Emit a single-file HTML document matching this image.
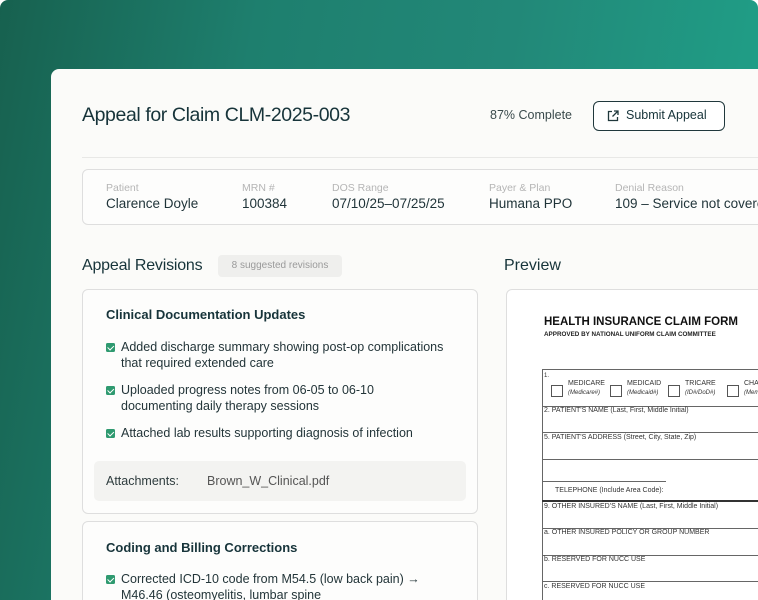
<!DOCTYPE html>
<html><head><meta charset="utf-8"><style>
*{margin:0;padding:0;box-sizing:border-box}
html,body{width:758px;height:600px;overflow:hidden;background:#fff;font-family:"Liberation Sans",sans-serif}
#w{position:relative;width:758px;height:600px;overflow:hidden}
.bg{position:absolute;left:0;top:0;width:758px;height:600px;border-radius:8px 8px 0 0;background:linear-gradient(100deg,#17614f 0%,#1e7f6e 30%,#228878 60%,#1fa58b 100%)}
.card{position:absolute;left:51px;top:69px;width:720px;height:540px;background:#fbfbf9;border-radius:8px}
.a{position:absolute;white-space:nowrap}
.t{color:#17343a}
.box{position:absolute;border:1px solid #dedede;border-radius:6px;background:#fdfdfc}
.lab{font-size:10.5px;color:#b5b5b5}
.val{font-size:13.5px;color:#1f3338}
.chk{position:absolute;width:9px;height:9px;background:#2f9a70;border-radius:1.5px}
.chk:after{content:"";position:absolute;left:2.5px;top:1px;width:2.5px;height:4.5px;border:solid #fff;border-width:0 1.2px 1.2px 0;transform:rotate(45deg)}
.it{font-size:12.5px;color:#233539;line-height:16px}
.f{position:absolute;font-size:7px;color:#333;white-space:nowrap}
.hl{position:absolute;left:542px;width:230px;height:1px;background:#666}
.cb{position:absolute;width:12px;height:12px;border:1px solid #555}
</style></head><body><div id="w">
<div class="bg"></div>
<div class="card"></div>
<div class="a t" style="left:82px;top:104px;font-size:19.5px;letter-spacing:-0.4px">Appeal for Claim CLM-2025-003</div>
<div class="a" style="left:490px;top:108px;font-size:12.5px;color:#3a4a4c">87% Complete</div>
<div class="a" style="left:593px;top:101px;width:132px;height:30px;border:1.3px solid #20383c;border-radius:6px;background:#fff"></div>
<svg class="a" style="left:606px;top:109px" width="14" height="14" viewBox="0 0 14 14" fill="none" stroke="#20383c" stroke-width="1.3"><path d="M6 2.5H2.5v9h9V8"/><path d="M8 2h4v4M12 2L6.5 7.5"/></svg>
<div class="a t" style="left:626px;top:108px;font-size:12.5px">Submit Appeal</div>
<div class="a" style="left:82px;top:157px;width:700px;height:1px;background:#e8e8e6"></div>
<div class="box" style="left:82px;top:169px;width:700px;height:56px"></div>
<div class="a lab" style="left:106px;top:182px">Patient</div><div class="a val" style="left:106px;top:196px">Clarence Doyle</div>
<div class="a lab" style="left:242px;top:182px">MRN #</div><div class="a val" style="left:242px;top:196px">100384</div>
<div class="a lab" style="left:332px;top:182px">DOS Range</div><div class="a val" style="left:332px;top:196px">07/10/25–07/25/25</div>
<div class="a lab" style="left:489px;top:182px">Payer &amp; Plan</div><div class="a val" style="left:489px;top:196px">Humana PPO</div>
<div class="a lab" style="left:615px;top:182px">Denial Reason</div><div class="a val" style="left:615px;top:196px">109 – Service not covered</div>
<div class="a t" style="left:82px;top:257px;font-size:16px;letter-spacing:-0.2px">Appeal Revisions</div>
<div class="a" style="left:218px;top:255px;width:124px;height:22px;background:#efefed;border-radius:4px;font-size:10px;color:#9a9a9a;text-align:center;line-height:22px">8 suggested revisions</div>
<div class="a t" style="left:504px;top:257px;font-size:16px">Preview</div>
<div class="box" style="left:82px;top:289px;width:396px;height:225px"></div>
<div class="a t" style="left:106px;top:307px;font-size:13px;font-weight:bold">Clinical Documentation Updates</div>
<div class="chk" style="left:106px;top:343px"></div><div class="a it" style="left:121px;top:339px">Added discharge summary showing post-op complications<br>that required extended care</div>
<div class="chk" style="left:106px;top:386px"></div><div class="a it" style="left:121px;top:382px">Uploaded progress notes from 06-05 to 06-10<br>documenting daily therapy sessions</div>
<div class="chk" style="left:106px;top:429px"></div><div class="a it" style="left:121px;top:425px">Attached lab results supporting diagnosis of infection</div>
<div class="a" style="left:94px;top:461px;width:372px;height:40px;background:#f3f3f1;border-radius:5px"></div>
<div class="a" style="left:106px;top:474px;font-size:12.5px;color:#2e3c3e">Attachments:</div>
<div class="a" style="left:207px;top:474px;font-size:12.5px;color:#555">Brown_W_Clinical.pdf</div>
<div class="box" style="left:82px;top:521px;width:396px;height:100px"></div>
<div class="a t" style="left:106px;top:540px;font-size:13px;font-weight:bold">Coding and Billing Corrections</div>
<div class="chk" style="left:106px;top:575px"></div><div class="a it" style="left:121px;top:571px">Corrected ICD-10 code from M54.5 (low back pain) →<br>M46.46 (osteomyelitis, lumbar spine</div>
<div class="box" style="left:506px;top:289px;width:300px;height:340px;background:#fff"></div>
<div class="a" style="left:544px;top:316px;font-size:11.5px;font-weight:bold;color:#111">HEALTH INSURANCE CLAIM FORM</div>
<div class="a" style="left:544px;top:331px;font-size:6.3px;font-weight:bold;color:#222">APPROVED BY NATIONAL UNIFORM CLAIM COMMITTEE</div>
<div class="a" style="left:542px;top:369px;width:1px;height:240px;background:#666"></div>
<div class="hl" style="top:369px"></div>
<div class="f" style="left:544px;top:373px;font-size:6px">1.</div>
<div class="cb" style="left:551px;top:385px"></div><div class="f" style="left:568px;top:379px;line-height:9px">MEDICARE<br><i style="font-size:6px">(Medicare#)</i></div>
<div class="cb" style="left:610px;top:385px"></div><div class="f" style="left:627px;top:379px;line-height:9px">MEDICAID<br><i style="font-size:6px">(Medicaid#)</i></div>
<div class="cb" style="left:668px;top:385px"></div><div class="f" style="left:685px;top:379px;line-height:9px">TRICARE<br><i style="font-size:6px">(ID#/DoD#)</i></div>
<div class="cb" style="left:727px;top:385px"></div><div class="f" style="left:744px;top:379px;line-height:9px">CHAMPVA<br><i style="font-size:6px">(Member)</i></div>
<div class="hl" style="top:406px"></div><div class="f" style="left:544px;top:407px">2. PATIENT'S NAME (Last, First, Middle Initial)</div>
<div class="hl" style="top:432px"></div><div class="f" style="left:544px;top:434px">5. PATIENT'S ADDRESS (Street, City, State, Zip)</div>
<div class="hl" style="top:459px"></div>
<div class="a" style="left:542px;top:481px;width:124px;height:1px;background:#666"></div>
<div class="f" style="left:555px;top:487px">TELEPHONE (Include Area Code):</div>
<div class="hl" style="top:500px;height:2px;background:#333"></div><div class="f" style="left:544px;top:503px">9. OTHER INSURED'S NAME (Last, First, Middle Initial)</div>
<div class="hl" style="top:528px"></div><div class="f" style="left:544px;top:529px">a. OTHER INSURED POLICY OR GROUP NUMBER</div>
<div class="hl" style="top:555px"></div><div class="f" style="left:544px;top:556px">b. RESERVED FOR NUCC USE</div>
<div class="hl" style="top:581px"></div><div class="f" style="left:544px;top:583px">c. RESERVED FOR NUCC USE</div>
</div></body></html>
